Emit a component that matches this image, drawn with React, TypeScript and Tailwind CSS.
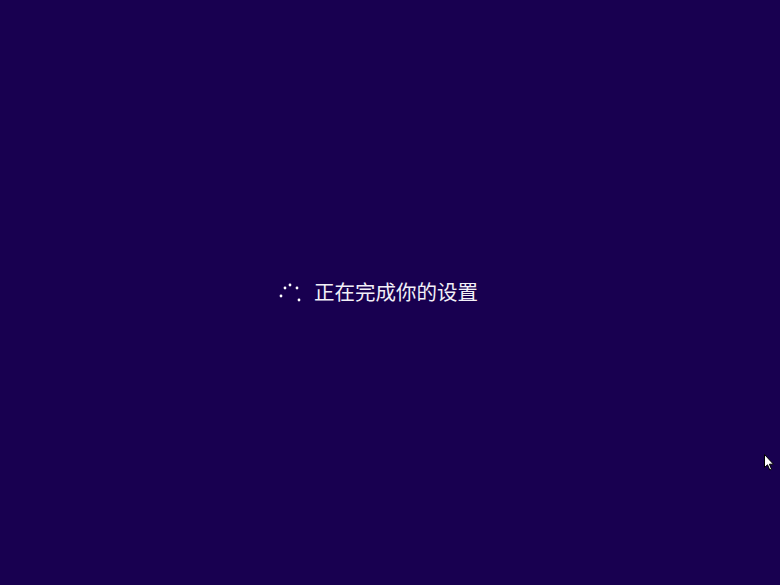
import React from 'react';

const DOTS: [number, number][] = [
  [5, 15],
  [9, 7],
  [14, 4],
  [21, 7],
  [23, 19],
];

function Spinner() {
  return (
    <svg width="28" height="24" viewBox="0 0 28 24" className="shrink-0">
      {DOTS.map(([x, y], i) => (
        <circle key={i} cx={x} cy={y} r="1.4" fill="#ffffff" />
      ))}
    </svg>
  );
}

function Cursor() {
  return (
    <svg width="12" height="18" viewBox="0 0 12 18" className="absolute left-[764px] top-[454px]">
      <path d="M0.5 0.5 L0.5 13.5 L3.5 10.8 L5.8 16 L7.6 15.2 L5.4 10.2 L9.5 10.2 Z" fill="#ffffff" stroke="#000000" strokeWidth="1" strokeLinejoin="round" />
    </svg>
  );
}

export default function App() {
  return (
    <div className="relative w-[780px] h-[585px] bg-[#180050] overflow-hidden">
      <div className="flex h-full items-center justify-center pr-[26px]">
        <div className="flex items-center gap-[10px]">
          <Spinner />
          <span
            className="text-[20.5px] leading-none text-[#f2f0f7] pb-[2px]"
            style={{ fontFamily: '"Noto Sans CJK SC", "Noto Sans", sans-serif' }}
          >
            正在完成你的设置
          </span>
        </div>
      </div>
      <Cursor />
    </div>
  );
}
